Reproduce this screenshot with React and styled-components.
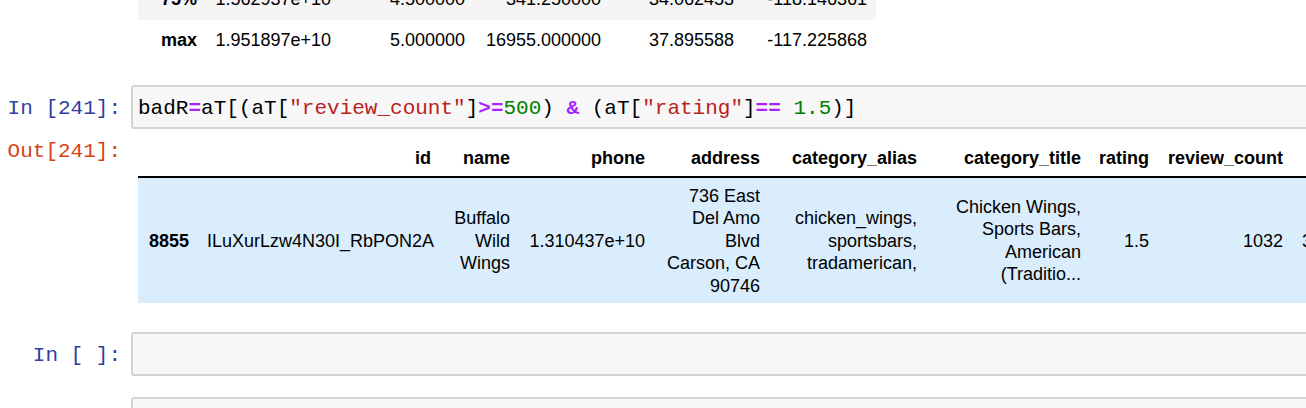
import React from "react";
import styled, { createGlobalStyle } from "styled-components";

//Styles
const GlobalStyle = createGlobalStyle`
  * {
    box-sizing: border-box;
  }
  html,
  body {
    margin: 0;
    padding: 0;
    overflow: hidden;
    background: #ffffff;
  }
`;

const mono = `"Liberation Mono", "DejaVu Sans Mono", monospace`;

const Notebook = styled.div`
  width: 1320px;
  margin-top: -21px;
  display: flex;
  flex-direction: column;
`;

const CellRow = styled.div`
  display: flex;
  align-items: flex-start;
  margin-top: ${p => p.gap || 0}px;
`;

const Prompt = styled.div`
  flex: none;
  width: 131px;
  padding-right: 10px;
  padding-top: ${p => p.top || 0}px;
  text-align: right;
  font-family: ${mono};
  font-size: 21px;
  line-height: 24px;
  white-space: pre;
  color: ${p => (p.out ? "#d84315" : "#303f9f")};
`;

const InputBox = styled.div`
  flex: 1;
  min-height: 44px;
  padding: 10px 5px 6px;
  border: 2px solid #d3d3d3;
  border-radius: 3px;
  background: #f7f7f7;
  font-family: ${mono};
  font-size: 21px;
  line-height: 24px;
  color: #000;
  white-space: pre;
`;

const Op = styled.span`
  color: #aa22ff;
  font-weight: bold;
`;

const Str = styled.span`
  color: #ba2121;
`;

const Num = styled.span`
  color: #008000;
`;

const OutputArea = styled.div`
  flex: 1;
  overflow: hidden;
  padding-left: 7px;
  padding-top: ${p => p.top || 0}px;
`;

const Table = styled.table`
  border-collapse: collapse;
  border-spacing: 0;
  table-layout: fixed;
  width: ${p => p.w}px;
  font-family: "Liberation Sans", Arial, sans-serif;
  font-size: 18px;
  color: #000;
`;

const Row = styled.tr`
  background: ${p => p.bg || "transparent"};
`;

const Th = styled.th`
  width: ${p => (p.w ? `${p.w}px` : "auto")};
  padding: ${p => p.pad || "6px 9px"};
  line-height: 22.5px;
  text-align: right;
  vertical-align: middle;
  font-weight: bold;
  white-space: nowrap;
  border-bottom: ${p => (p.rule ? "2px solid #000" : "none")};
`;

const Td = styled.td`
  padding: ${p => p.pad || "6px 9px"};
  line-height: 22.5px;
  text-align: right;
  vertical-align: middle;
  overflow: hidden;
`;

//Data
const describeCols = [68, 134, 134, 136, 133, 133];
const describeRows = [
  ["75%", "1.562937e+10", "4.500000", "341.250000", "34.062453", "-118.146361"],
  ["max", "1.951897e+10", "5.000000", "16955.000000", "37.895588", "-117.225868"],
];

const outCols = [
  ["", 60],
  ["id", 242],
  ["name", 79],
  ["phone", 135],
  ["address", 115],
  ["category_alias", 157],
  ["category_title", 164],
  ["rating", 68],
  ["review_count", 134],
  ["latitude", 104],
];

const outRow = [
  "ILuXurLzw4N30I_RbPON2A",
  "Buffalo Wild Wings",
  "1.310437e+10",
  "736 East Del Amo Blvd Carson, CA 90746",
  "chicken_wings, sportsbars, tradamerican,",
  "Chicken Wings, Sports Bars, American (Traditio...",
  "1.5",
  "1032",
  "33.834850",
];

const sum = list => list.reduce((a, b) => a + b, 0);

const bodyPad = "7px 9px 6px";

//Component
const App = () => {
  return (
    <>
      <GlobalStyle />
      <Notebook>
        <CellRow>
          <Prompt />
          <OutputArea>
            <Table w={sum(describeCols)}>
              <tbody>
                {describeRows.map((row, i) => (
                  <Row key={row[0]} bg={i % 2 === 0 ? "#f5f5f5" : null}>
                    <Th pad="9px" w={describeCols[0]}>
                      {row[0]}
                    </Th>
                    {row.slice(1).map((v, j) => (
                      <Td pad="9px" key={j} style={i === 0 ? { width: describeCols[j + 1] } : null}>
                        {v}
                      </Td>
                    ))}
                  </Row>
                ))}
              </tbody>
            </Table>
          </OutputArea>
        </CellRow>

        <CellRow gap={25}>
          <Prompt top={12}>In [241]:</Prompt>
          <InputBox>
            badR<Op>=</Op>aT[(aT[<Str>"review_count"</Str>]<Op>&gt;=</Op>
            <Num>500</Num>) <Op>&amp;</Op> (aT[<Str>"rating"</Str>]<Op>==</Op>{" "}
            <Num>1.5</Num>)]
          </InputBox>
        </CellRow>

        <CellRow gap={8}>
          <Prompt out top={3}>Out[241]:</Prompt>
          <OutputArea top={4}>
            <Table w={sum(outCols.map(c => c[1]))}>
              <thead>
                <tr>
                  {outCols.map(([label, w]) => (
                    <Th key={label || "index"} w={w} rule>
                      {label}
                    </Th>
                  ))}
                </tr>
              </thead>
              <tbody>
                <Row bg="#d9edfd">
                  <Th pad={bodyPad}>8855</Th>
                  {outRow.map((v, i) => (
                    <Td pad={bodyPad} key={i}>{v}</Td>
                  ))}
                </Row>
              </tbody>
            </Table>
          </OutputArea>
        </CellRow>

        <CellRow gap={29}>
          <Prompt top={12}>In [ ]:</Prompt>
          <InputBox />
        </CellRow>

        <CellRow gap={21}>
          <Prompt />
          <InputBox />
        </CellRow>
      </Notebook>
    </>
  );
};

export default App;
